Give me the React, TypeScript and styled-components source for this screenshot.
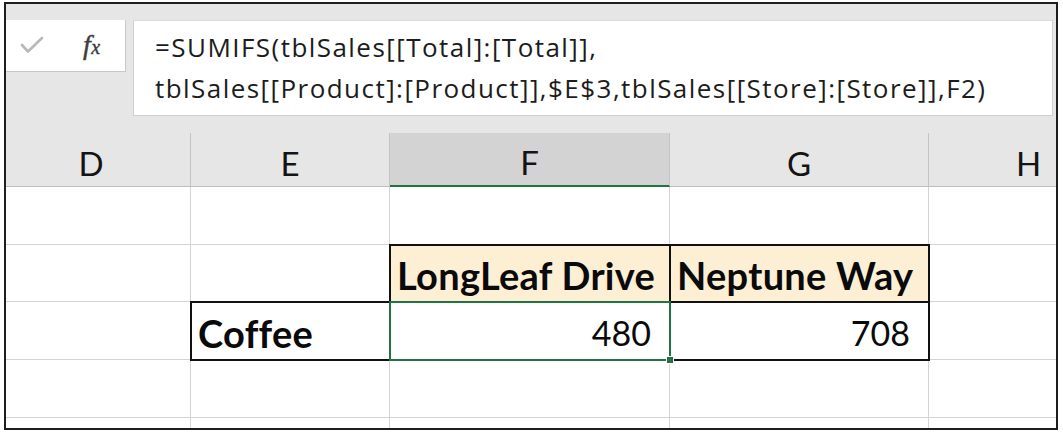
import React from "react";
import styled, { createGlobalStyle } from "styled-components";

const Global = createGlobalStyle`
  html, body { margin: 0; padding: 0; background: #ffffff; }
  body { font-family: Lato, "Open Sans", sans-serif; }
`;

const Frame = styled.div`
  box-sizing: border-box;
  margin: 2px 0 0 4px;
  width: 1054px;
  height: 428px;
  border: 2px solid #1e1e1e;
  background: #e6e6e6;
  overflow: hidden;
  display: flex;
  flex-direction: column;
`;

const TopBand = styled.div`
  height: 16px;
  flex: none;
`;

const FormulaRow = styled.div`
  display: flex;
  align-items: flex-start;
  gap: 7px;
  height: 96px;
  flex: none;
`;

const NameBox = styled.div`
  box-sizing: border-box;
  width: 120px;
  height: 52px;
  background: #ffffff;
  border-right: 1px solid #c9c9c9;
  border-bottom: 1px solid #c9c9c9;
  display: flex;
  align-items: center;
  padding: 0 0 2px 14px;
  gap: 39px;
`;

const FxLabel = styled.span`
  font-family: "Liberation Serif", serif;
  font-style: italic;
  font-size: 28px;
  color: #3c3c3c;
  line-height: 1;
  letter-spacing: 0.5px;
  -webkit-text-stroke: 0.4px #3c3c3c;
  & small {
    font-size: 20px;
  }
`;

const FormulaBox = styled.div`
  box-sizing: border-box;
  width: 920px;
  height: 96px;
  background: #ffffff;
  border: 1px solid #cfcfcf;
  border-top-color: #dadada;
  padding: 6px 0 0 21px;
  font-family: "Open Sans", Lato, sans-serif;
  font-size: 26px;
  letter-spacing: 1.45px;
  line-height: 41px;
  color: #1c1c1c;
  white-space: pre;
`;

const Gap = styled.div`
  height: 17px;
  flex: none;
`;

const Sheet = styled.div`
  display: grid;
  grid-template-columns: 199px 199px 280px 259px 200px;
  grid-template-rows: 54px 58px 57px 58px 58px 58px;
  margin-left: -14px;
  background: #ffffff;
  flex: none;
`;

const Header = styled.div<{ $active?: boolean }>`
  box-sizing: border-box;
  background: ${(p) => (p.$active ? "#d3d3d3" : "#e6e6e6")};
  border-right: 1px solid #c4c4c4;
  border-bottom: ${(p) => (p.$active ? "2px solid #217346" : "1px solid #bdbdbd")};
  display: flex;
  align-items: flex-end;
  justify-content: center;
  padding-bottom: 3px;
  font-family: Lato, "Open Sans", sans-serif;
  font-size: 33px;
  line-height: 40px;
  color: #141414;
`;

type CellKind = "plain" | "boxed" | "head" | "selected";

const Cell = styled.div<{ $kind?: CellKind; $align?: "left" | "right"; $bold?: boolean }>`
  box-sizing: border-box;
  position: relative;
  border-right: 1px solid #d4d4d4;
  border-bottom: 1px solid #d4d4d4;
  display: flex;
  align-items: flex-end;
  justify-content: ${(p) => (p.$align === "right" ? "flex-end" : "flex-start")};
  padding: ${(p) => (p.$align === "right" ? "0 18px 4px 0" : "0 0 4px 7px")};
  font-family: Lato, "Open Sans", sans-serif;
  font-size: ${(p) => (p.$bold ? "38px" : "34px")};
  letter-spacing: ${(p) => (p.$bold ? "0.3px" : "0")};
  font-weight: ${(p) => (p.$bold ? 700 : 400)};
  line-height: 44px;
  color: #0a0a0a;
  white-space: nowrap;
  background: ${(p) => (p.$kind === "head" ? "#fdefd4" : "#ffffff")};
  z-index: ${(p) => (p.$kind === "selected" ? 3 : p.$kind === "plain" || !p.$kind ? "auto" : 1)};
  outline: ${(p) =>
    p.$kind === "selected"
      ? "2px solid #217346"
      : p.$kind === "boxed" || p.$kind === "head"
      ? "2px solid #111111"
      : "none"};
  outline-offset: -1px;

  ${(p) =>
    p.$kind === "selected" &&
    `
    &::after {
      content: "";
      position: absolute;
      right: -5px;
      bottom: -5px;
      width: 6px;
      height: 6px;
      background: #217346;
      border: 1px solid #ffffff;
    }
  `}
`;

const Check = () => (
  <svg width="24" height="18" viewBox="0 0 24 18" fill="none">
    <polyline points="2,9 8,15.5 22,2" stroke="#b8b8b8" strokeWidth="2.6" strokeLinecap="round" strokeLinejoin="round" />
  </svg>
);

const columns = ["D", "E", "F", "G", "H"];

type CellDef = { text?: string; kind?: CellKind; align?: "left" | "right"; bold?: boolean };

const rows: CellDef[][] = [
  [{}, {}, {}, {}, {}],
  [{}, {}, { text: "LongLeaf Drive", kind: "head", bold: true }, { text: "Neptune Way", kind: "head", bold: true }, {}],
  [{}, { text: "Coffee", kind: "boxed", bold: true }, { text: "480", kind: "selected", align: "right" }, { text: "708", kind: "boxed", align: "right" }, {}],
  [{}, {}, {}, {}, {}],
  [{}, {}, {}, {}, {}],
];

export default function App() {
  return (
    <>
      <Global />
      <Frame>
        <TopBand />
        <FormulaRow>
          <NameBox>
            <Check />
            <FxLabel>
              f<small>x</small>
            </FxLabel>
          </NameBox>
          <FormulaBox>
            {"=SUMIFS(tblSales[[Total]:[Total]],\ntblSales[[Product]:[Product]],$E$3,tblSales[[Store]:[Store]],F2)"}
          </FormulaBox>
        </FormulaRow>
        <Gap />
        <Sheet>
          {columns.map((c) => (
            <Header key={c} $active={c === "F"}>
              {c}
            </Header>
          ))}
          {rows.map((r, ri) =>
            r.map((cell, ci) => (
              <Cell key={`${ri}-${ci}`} $kind={cell.kind} $align={cell.align} $bold={cell.bold}>
                {cell.text}
              </Cell>
            ))
          )}
        </Sheet>
      </Frame>
    </>
  );
}
